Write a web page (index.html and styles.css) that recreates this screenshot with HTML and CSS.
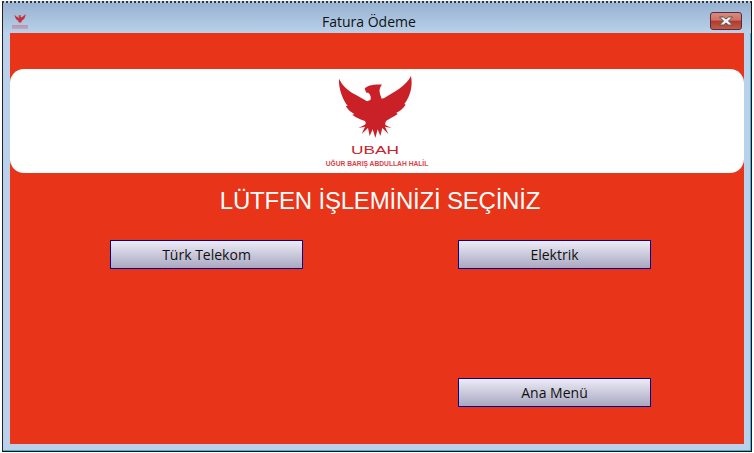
FILE: index.html
```html
<!DOCTYPE html>
<html lang="tr">
    <head>
        <meta charset="UTF-8">
        <meta name="viewport" content="width=device-width, initial-scale=1.0">
        <title>Fatura Ödeme</title>
        <link rel="stylesheet" href="styles.css">
    </head>
    <body>
        <svg class="defs" width="0" height="0">
            <symbol id="eagle" viewBox="0 0 240 204">
                <path d="M12 20 C24 44 42 58 62 68 L96 88 L106 84 C110 76 106 68 100 62 L94 62 L89 50 C96 42 110 37 141 38 C134 46 132 54 135 66 L140 80 L148 78 C176 60 212 44 228 12 C234 42 226 72 208 96 L212 98 C204 110 194 118 184 122 L188 126 C176 134 164 140 154 146 C150 152 150 156 152 160 L170 168 L150 164 L160 186 L142 168 L136 192 L128 172 L121 198 L113 172 L104 192 L99 168 L80 186 L90 164 L70 168 L90 158 C94 152 92 148 88 146 C76 142 62 136 52 128 L58 126 C46 120 38 112 32 102 L38 102 C24 84 10 50 12 20 Z"/>
            </symbol>
        </svg>
        <div class="window">
            <div class="titlebar">
                <div class="title-icon">
                    <svg class="title-eagle"><use href="#eagle"/></svg>
                    <div class="title-icon-text"></div>
                </div>
                <span class="title-text">Fatura Ödeme</span>
                <div class="close-btn">
                    <svg viewBox="0 0 16 10" width="16" height="10">
                        <path d="M1.5 1 H5.5 L8 3 L10.5 1 H14.5 L10.5 5 L14.5 9 H10.5 L8 7 L5.5 9 H1.5 L5.5 5 Z"/>
                    </svg>
                </div>
            </div>
            <div class="content">
                <div class="banner">
                    <svg class="logo-mark"><use href="#eagle"/></svg>
                    <div class="logo-name">UBAH</div>
                    <div class="logo-sub">UĞUR BARIŞ ABDULLAH HALİL</div>
                </div>
                <h1 class="heading">LÜTFEN İŞLEMİNİZİ SEÇİNİZ</h1>
                <div class="actions">
                    <button type="button" class="btn">Türk Telekom</button>
                    <button type="button" class="btn">Elektrik</button>
                    <button type="button" class="btn btn-menu">Ana Menü</button>
                </div>
            </div>
        </div>
    </body>
</html>
```

FILE: styles.css
```css
* {
    box-sizing: border-box;
}

html, body {
    margin: 0;
    height: 453px;
    background: #fff;
    overflow: hidden;
}

.defs {
    display: block;
}

.window {
    width: 750px;
    height: 451px;
    margin: 1px 0 0 2px;
    padding: 0 7px 7px 7px;
    display: flex;
    flex-direction: column;
    border-top: 2px dotted #333;
    border-left: 1px solid #222;
    border-right: 1px solid #111;
    border-bottom: 1px solid #111;
    background: #b9d1ea;
    box-shadow: inset -1px -1px 0 #2fb8dc;
}

.titlebar {
    height: 30px;
    flex: none;
    margin: 0 -7px;
    padding: 0 9px 0 8px;
    display: flex;
    align-items: center;
    background: linear-gradient(#97b2d1, #b9d1ea);
}

.title-icon {
    width: 16px;
    margin-left: 1px;
    margin-top: 5px;
    display: flex;
    flex-direction: column;
    align-items: center;
}

.title-eagle {
    width: 12px;
    height: 11px;
    fill: #c8303c;
}

.title-icon-text {
    width: 16px;
    height: 4px;
    margin-top: 1px;
    background: linear-gradient(rgba(200, 90, 110, 0.5), rgba(200, 90, 110, 0.3));
}

.title-text {
    margin-left: 294px;
    margin-top: 6px;
    font: 14px "Open Sans", "Noto Sans", sans-serif;
    color: #111;
}

.close-btn {
    width: 32px;
    height: 18px;
    margin-left: auto;
    margin-top: 5px;
    display: flex;
    align-items: center;
    justify-content: center;
    border: 1px solid #5a2a3c;
    border-radius: 3px;
    background: linear-gradient(#d98a80 0%, #cf7065 45%, #b03a2c 50%, #c45a48 100%);
}

.close-btn path {
    fill: #f2f2f2;
    stroke: #555;
    stroke-width: 1;
}

.content {
    flex: 1;
    background: #e83418;
    padding-top: 36px;
}

.banner {
    height: 104px;
    background: #fff;
    border-radius: 14px;
    display: flex;
    flex-direction: column;
    align-items: center;
    padding-top: 3px;
    color: #c8232c;
}

.logo-mark {
    width: 80px;
    height: 68px;
    flex: none;
    fill: #ca2129;
    margin-right: 4px;
}

.logo-name {
    font: 11.5px/14px "Liberation Sans", sans-serif;
    margin-top: 3px;
    margin-right: 4px;
    transform: scaleX(1.5);
}

.logo-sub {
    font: bold 6.7px/9px "Liberation Sans", sans-serif;
    margin-top: 2px;
    color: #dc4048;
}

.heading {
    margin: 0 0 0 6px;
    padding-top: 13px;
    text-align: center;
    font: 24px/30px "Liberation Sans", sans-serif;
    letter-spacing: -0.2px;
    color: #fff;
}

.actions {
    display: grid;
    grid-template-columns: 193px 193px;
    grid-template-rows: 29px 29px;
    justify-content: space-between;
    row-gap: 109px;
    margin: 24px 93px 0 100px;
}

.btn {
    font: 14px "Open Sans", "Noto Sans", sans-serif;
    color: #111;
    padding: 0;
    border: 1px solid #000099;
    background: linear-gradient(#ecebf5, #a9a8c2);
}

.btn-menu {
    grid-column: 2;
}
```
